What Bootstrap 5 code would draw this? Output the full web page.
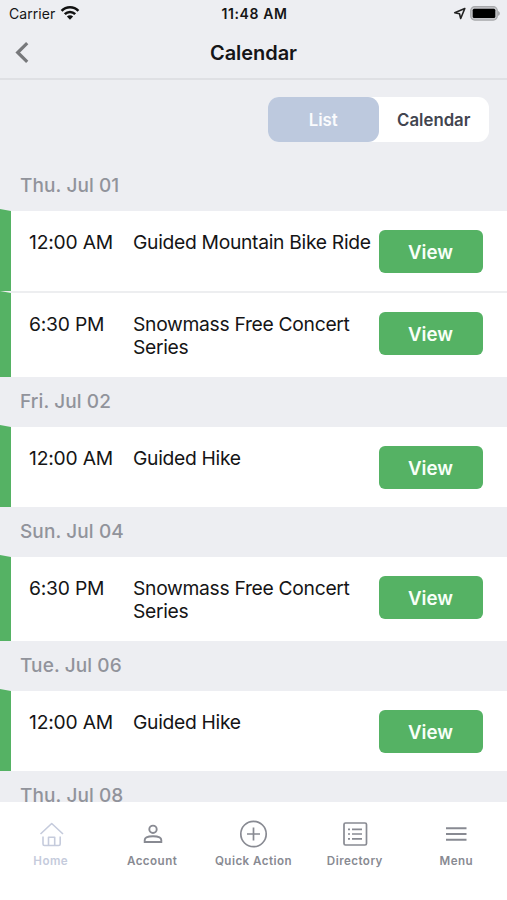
<!DOCTYPE html>
<html lang="en">
<head>
<meta charset="utf-8">
<meta name="viewport" content="width=device-width, initial-scale=1">
<title>Calendar</title>
<link href="https://cdn.jsdelivr.net/npm/bootstrap@5.3.0/dist/css/bootstrap.min.css" rel="stylesheet">
<style>
body{font-family:Inter,"Liberation Sans",sans-serif;background:#edeef2;color:#151516;height:900px}
.app{height:900px}
.status{height:27px;padding:0 7px 0 9px;font-size:14px;line-height:27px}
.status .side{width:120px}
.carrier{letter-spacing:.05px}
.wifi{margin-top:-2px}
.clock{font-size:14px;font-weight:600;letter-spacing:.6px}
.titlebar{height:53px;border-bottom:2px solid #dfe0e4;padding:0 15px}
.titlebar .end{width:14px}
.titlebar h1{font-size:20px;font-weight:600;letter-spacing:-.05px;line-height:50px}
.switcher{width:221px;height:45px;margin:17px 18px 0 0;border-radius:11px;background:#fff}
.switcher button{width:110.5px;border:0;background:none;font-size:16.8px;font-weight:600;color:#42454f;padding:2px 0 0;border-radius:11px;letter-spacing:0}
.switcher .on{background:#bdc9de;color:#fafbfd}
.day{height:50px;padding-left:20px;font-size:19px;font-weight:500;color:#91939b;line-height:50px;letter-spacing:.1px}
.day.first{height:69px;padding-top:19px}
.event{height:80px;padding:19px 24px 0 29px;position:relative;background:#fff;font-size:19.3px;line-height:23.4px}
.event.tall{height:84px}
.event.ruled{height:82px;border-bottom:2px solid #edeef0}
.event::before{content:"";position:absolute;left:0;top:-2px;bottom:0;width:11px;background:#55b264;clip-path:polygon(0 0,100% 2px,100% 100%,0 100%)}
.time{width:104px;padding-top:1px;letter-spacing:-.2px}
.what{width:245.5px;padding-top:1px;letter-spacing:-.31px;white-space:nowrap}
.view{width:104px;height:43px;border:0;border-radius:6px;background:#55b264;color:#f8fff8;font-size:18.7px;font-weight:600;padding:2px 0 0}
.tabs{height:98px;background:#fff;padding-top:17px}
.tab{width:20%;color:#888a92;font-size:11.6px;font-weight:600;line-height:16px;letter-spacing:.45px;white-space:nowrap}
.tab.current{color:#c5cbdc}
.tab svg{display:block;margin-bottom:4px}
</style>
<script src="https://cdn.jsdelivr.net/npm/bootstrap@5.3.0/dist/js/bootstrap.bundle.min.js"></script>
</head>
<body class="m-0 overflow-hidden">
<div class="app d-flex flex-column overflow-hidden">
<header>
  <div class="status d-flex justify-content-between align-items-center">
    <div class="side d-flex align-items-center"><span class="carrier">Carrier</span>
      <svg class="wifi ms-1" width="22" height="16" viewBox="-1 0 22 16" fill="none" stroke="#111" stroke-width="2.6"><path d="M1.6 5.9C6.3 1.1 13.7 1.1 18.4 5.9M4.8 9.2c2.9-2.9 7.5-2.9 10.4 0"/><path d="M6.9 11.5c1.8-1.6 4.4-1.6 6.2 0L10 14.8z" fill="#111" stroke="none"/></svg>
    </div>
    <span class="clock">11:48 AM</span>
    <div class="side d-flex align-items-center justify-content-end gap-1">
      <svg width="13" height="13" viewBox="0 0 13 13" fill="none" stroke="#222" stroke-width="1.6" stroke-linejoin="round"><path d="M11.8 1.5 1.7 5.8l4.8 1 1.2 4.7z"/></svg>
      <svg width="30" height="15" viewBox="0 0 30 15"><rect x=".7" y=".7" width="26.6" height="13.4" rx="4" fill="#c4c5c8" stroke="#a7a8ab" stroke-width="1.2"/><rect x="2.7" y="2.7" width="22.6" height="9.4" rx="1.5" fill="#000"/><path d="M28 5c2.5.8 2.5 4 0 4.8z" fill="#a7a8ab"/></svg>
    </div>
  </div>
  <div class="titlebar d-flex justify-content-between align-items-center">
    <svg width="14" height="22" viewBox="0 0 14 22" fill="none" stroke="#77787b" stroke-width="3.2"><path d="M12.2 1.2 2.7 10.5l9.5 9.3"/></svg>
    <h1 class="m-0">Calendar</h1><span class="end"></span>
  </div>
</header>
<main class="flex-grow-1 overflow-hidden">
  <div class="switcher d-flex ms-auto"><button class="on">List</button><button>Calendar</button></div>
  <div class="day first">Thu. Jul 01</div>
  <div class="event ruled d-flex"><div class="time">12:00 AM</div><div class="what">Guided Mountain Bike Ride</div><button class="view">View</button></div>
  <div class="event tall d-flex"><div class="time">6:30 PM</div><div class="what">Snowmass Free Concert<br>Series</div><button class="view">View</button></div>
  <div class="day">Fri. Jul 02</div>
  <div class="event d-flex"><div class="time">12:00 AM</div><div class="what">Guided Hike</div><button class="view">View</button></div>
  <div class="day">Sun. Jul 04</div>
  <div class="event tall d-flex"><div class="time">6:30 PM</div><div class="what">Snowmass Free Concert<br>Series</div><button class="view">View</button></div>
  <div class="day">Tue. Jul 06</div>
  <div class="event d-flex"><div class="time">12:00 AM</div><div class="what">Guided Hike</div><button class="view">View</button></div>
  <div class="day">Thu. Jul 08</div>
</main>
<nav class="tabs d-flex flex-shrink-0">
  <div class="tab current d-flex flex-column align-items-center"><svg width="30" height="30" viewBox="0 0 30 30" fill="none" stroke="currentColor" stroke-width="1.6" stroke-linejoin="round"><path d="M4.5 15 15.7 4.5 27 15M7 17.5v7.5c0 1 .5 1.5 1.5 1.5h14.200c1 0 1.500-.5 1.500-1.500v-7.500M12.500 26.500v-8.300h6.200v8.300"/></svg>Home</div>
  <div class="tab d-flex flex-column align-items-center"><svg width="30" height="30" viewBox="0 0 30 30" fill="none" stroke="currentColor" stroke-width="1.9"><circle cx="16" cy="10.3" r="3.7"/><path d="M7.700 23v-2c0-5 16.600-5 16.600 0v2z"/></svg>Account</div>
  <div class="tab d-flex flex-column align-items-center"><svg width="30" height="30" viewBox="0 0 30 30" fill="none" stroke="currentColor" stroke-width="1.7"><circle cx="15.5" cy="15" r="12.7"/><path d="M9 15h13M15.5 8.5v13"/></svg>Quick Action</div>
  <div class="tab d-flex flex-column align-items-center"><svg width="30" height="30" viewBox="0 0 30 30" fill="none" stroke="currentColor" stroke-width="1.7"><rect x="4" y="4" width="22.5" height="22" rx="1.5"/><path d="M12 10.3h10M12 15h10M12 19.8h10M8 10.3h2M8 15h2M8 19.8h2"/></svg>Directory</div>
  <div class="tab d-flex flex-column align-items-center"><svg width="30" height="30" viewBox="0 0 30 30" fill="none" stroke="currentColor" stroke-width="2"><path d="M5 9.300h20.500M5 15h20.500M5 20.700h20.500"/></svg>Menu</div>
</nav>
</div>
</body>
</html>
